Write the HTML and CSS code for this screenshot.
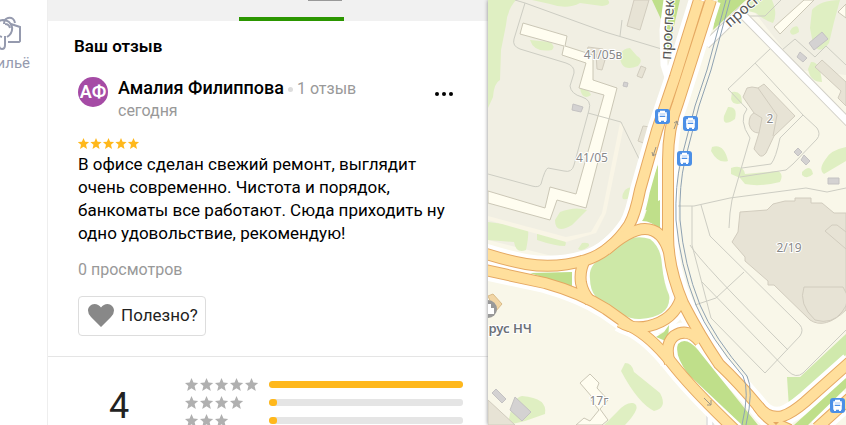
FILE: index.html
```
<!DOCTYPE html>
<html lang="ru">
<head>
    <meta charset="UTF-8">
    <meta name="viewport" content="width=device-width, initial-scale=1.0">
    <title>Отзывы</title>
    <link rel="stylesheet" href="styles.css">
</head>
<body>
    <div class="app">
        <!-- Рубрики слева -->
        <nav class="rubrics">
            <a href="#" class="rubric">
                <svg class="rubric-icon" width="30" height="36" viewBox="10 0 30 36" fill="none" stroke="#959aae" stroke-width="2">
                    <path d="M24 20v9q0 4-3 4t-3-4v-6M26 21q6-4 5-10q-2-7-9-7q-8 1-8 8t7 9M23 8q0-5 4-6q6-1 7 5M29 12q-1-4-5-4M30 8l9 3v14l-1 1H27"/>
                </svg>
                <span>Жильё</span>
            </a>
        </nav>

        <main class="panel">
            <div class="tabs">
                <div class="tab-badge"></div>
                <div class="tab-active"></div>
            </div>

            <section class="own-review">
                <h2>Ваш отзыв</h2>
                <article class="review">
                    <header class="author">
                        <div class="avatar">АФ</div>
                        <div class="author-info">
                            <div><span class="name">Амалия Филиппова</span><span class="dot"></span><span class="count">1 отзыв</span></div>
                            <div class="date">сегодня</div>
                        </div>
                        <button class="more" aria-label="Ещё"><i></i><i></i><i></i></button>
                    </header>
                    <svg class="stars" width="62" height="12" viewBox="0 0 62 12" fill="#ffb81c">
                        <defs>
                            <path id="star" d="M5.500 0l1.600 3.800 4 .3-3.100 2.700 1 4.200-3.500-2.300-3.500 2.300 1-4.200-3.100-2.700 4-.3z"/>
                            <path id="star-big" d="M6.500 0l2 4.500 4.700.4-3.600 3.200 1.200 4.800-4.300-2.600-4.300 2.600 1.200-4.800L0 4.900l4.600-.4z"/>
                        </defs>
                        <use href="#star"/><use href="#star" x="12.500"/><use href="#star" x="25"/><use href="#star" x="37.500"/><use href="#star" x="50"/>
                    </svg>
                    <p class="text">В офисе сделан свежий ремонт, выглядит очень современно. Чистота и порядок, банкоматы все работают. Сюда приходить ну одно удовольствие, рекомендую!</p>
                    <div class="views">0 просмотров</div>
                    <button class="useful">
                        <svg width="26" height="23" viewBox="0 0 26 23" fill="#888"><path d="M13 23L3 13Q0 10 0 6.500C0 3 3 0 6.500 0Q10.500 0 13 3.500Q15.500 0 19.500 0C23 0 26 3 26 6.500Q26 10 23 13z"/></svg>
                        Полезно?
                    </button>
                </article>
            </section>

            <section class="rating">
                <div class="score">4</div>
                <div class="rows">
                    <svg class="gray-stars" width="74" height="13" viewBox="0 0 74 13"><use href="#star-big"/><use href="#star-big" x="15"/><use href="#star-big" x="30"/><use href="#star-big" x="45"/><use href="#star-big" x="60"/></svg>
                    <div class="bar"><div class="fill" style="width: 100%"></div></div>
                    <svg class="gray-stars" width="74" height="13" viewBox="0 0 74 13"><use href="#star-big"/><use href="#star-big" x="15"/><use href="#star-big" x="30"/><use href="#star-big" x="45"/></svg>
                    <div class="bar"><div class="fill" style="width: 4%"></div></div>
                    <svg class="gray-stars" width="74" height="13" viewBox="0 0 74 13"><use href="#star-big"/><use href="#star-big" x="15"/><use href="#star-big" x="30"/></svg>
                    <div class="bar"><div class="fill" style="width: 4%"></div></div>
                </div>
            </section>
        </main>

        <!-- Карта -->
        <div class="map">
            <svg viewBox="488 0 358 425" preserveAspectRatio="xMinYMin slice">
                <defs>
                    <g id="stop">
                        <rect width="15" height="15" rx="3" fill="#4b8fe6"/>
                        <path d="M4 4h7v7H4zM3 6h9M5 2.500h5" fill="none" stroke="#fff" stroke-width="1.500"/>
                        <path d="M4 8h7v3H4zM4 11h2v2H4zM9 11h2v2H9z" fill="#fff"/>
                    </g>
                    <g id="roads">
                        <path d="M699 0L675 77L657 130L640 190Q635 215 629 225Q611 252 586 260Q556 269 526 264Q508 261 480 252"/>
                        <path d="M711 0L678 103Q668 128 668 160V235Q668 268 683 303Q700 336 719 364Q740 384 758 406Q768 420 783 416Q792 413 805 402L850 362"/>
                        <path d="M480 269L545 283Q581 293 606 309L630 326Q650 336 671 362Q692 389 735 430"/>
                        <path d="M586 258Q579 270 581 283Q583 293 590 301M606 250Q630 229 645 229Q662 229 669 252M620 322Q633 330 649 326Q674 320 681 298M670 363Q664 345 674 336Q688 327 700 342M850 398L817 428M758 406Q768 422 790 430"/>
                    </g>
                </defs>
                <rect x="488" width="358" height="425" fill="#f9f7e9"/>
                <path fill="#f1efe3" d="M488 0H698L640 200Q620 250 560 258L488 240zM745 0H846V75L800 70z"/>

                <!-- Зелень -->
                <g fill="#dfefc2">
                    <path d="M488 0H516Q507 10 506 25L501 50L500 80Q494 83 493 97L488 108zM532 0H608Q612 5 602 6L580 3Q567 10 550 4zM530 40L550 42Q556 46 552 50Q534 53 530 40zM620 55Q623 48 630 48L637 56Q644 60 638 66Q620 73 620 55zM580 88Q590 90 591 95Q582 101 580 88zM625 190Q632 184 631 192Q629 201 623 199Q621 196 625 190zM560 212Q575 206 587 210L572 225Q555 235 555 220zM488 222L527 227Q530 230 526 250Q516 254 514 242L488 240zM537 233L560 237Q568 240 565 246Q555 246 537 240zM582 243Q590 242 589 246Q582 252 578 249z"/>
                    <path d="M748 0H772Q778 14 773 23Q762 19 756 13L748 11zM812 10Q820 0 840 0L834 22L829 43Q820 56 813 44L810 28zM792 28Q799 23 799 32Q791 38 790 31zM811 62Q820 61 822 82Q810 82 808 69zM732 92Q742 90 742 103Q733 106 731 99zM728 107Q738 106 735 119Q722 128 724 116zM712 147Q724 143 728 161Q718 164 711 151zM731 168Q743 164 745 174L778 171Q784 174 780 182Q760 187 745 184L740 178L731 174zM802 172Q811 163 813 174Q807 180 802 175zM846 147Q830 150 825 160Q818 170 824 174L846 161z"/>
                    <path d="M625 363Q632 363 634 372L660 393Q668 408 654 411Q638 403 621 371zM633 403Q643 406 625 425H604L618 411Q626 402 633 403zM508 425Q512 397 522 396Q548 398 545 414L525 421z"/>
                </g>
                <path fill="#d0e9ac" d="M787 377H800L846 334V355L789 408z"/>
                <path fill="#bfdf8a" d="M680 0L666 60V30L652 0zM718 0H746L713 30zM659 162V210H640z"/>
                <path fill="#f9f5e6" d="M620 123L602 213L591 232L566 237L488 216V220L566 242L596 233L606 213L624 125z"/>

                <!-- Здания -->
                <g fill="#fffdf0" stroke="#cbc7b6">
                    <path d="M523 23L567 36L565 46L593 55L593 80L617 88L586 208L557 200L550 220L488 203V191L545 208L550 187L576 194L604 95L579 88L586 63L562 55L564 46L520 34z"/>
                    <path d="M774 27L804 0H814L780 34zM838 12L846 4V18zM580 383L590 374L599 383L597 388L608 400L600 409L608 420L602 425H576L584 418L590 421L599 410L591 400L592 397z"/>
                </g>
                <g fill="#e7e3d5" stroke="#d1ccbe">
                    <path d="M634 0H649L640 30L627 26zM588 47L603 49V59L605 60L602 70L597 69L596 54L587 52zM641 66L646 68L642 78L637 76zM643 126L650 127L646 144L638 141zM815 67L822 60L846 82V106L838 98L841 91z"/>
                    <path d="M743 97L747 88L752 87L758 88L764 84L795 116L774 136L766 153Q762 158 759 155L754 149L759 133Q751 133 749 124Q749 115 754 113z"/>
                    <path fill="none" d="M758 88L777 115L773 136M754 113L762 118L759 133"/>
                    <path d="M740 212L767 210L773 204L785 201H795V198H811V203H822L834 213H846V310Q825 330 810 320L774 285H768V281L745 261V257L732 242L738 232z"/>
                    <path d="M804 287H843Q852 300 842 312Q832 325 815 320Q798 304 804 287zM825 231L832 225H837L846 232V249zM488 400L515 425H488z"/>
                </g>
                <g fill="#d4d2d2" stroke="#c4c2c2">
                    <path d="M573 104L583 107L581 112L572 110zM624 82L628 83L627 87L623 86zM809 43L822 32L828 39L814 50zM800 52L807 58L803 62L797 57zM798 148L802 152L798 156L794 152zM804 155L810 161L806 165L801 160zM828 178H839V184H828zM496 389L506 399L502 403L492 393zM515 397L531 412L522 421L510 410z"/>
                </g>

                <!-- Дорожки -->
                <g fill="none" stroke="#cdcdc3">
                    <path d="M515 0L525 3L514 39Q512 46 520 49L566 63Q575 66 574 73L570 86Q571 94 582 97Q592 100 589 110L574 165Q572 173 564 171L548 168Q545 169 541 184Q539 188 532 186L488 174M525 3L605 32L665 50M622 20L620 36M588 113L621 122L645 171"/>
                    <path d="M770 49L728 89L747 109Q738 120 750 138L732 200L730 213M755 63L803 115L817 128Q821 134 817 139L793 164L786 170L740 177M803 115L780 138Q776 158 771 164L742 168M748 16L765 16L781 0M782 50L795 39L815 57L826 46L846 65M673 206H694L730 198L806 188L827 192L846 188M692 206V245L711 318L765 373L800 336Q804 330 800 325L710 236L701 205M690 245Q700 262 788 350M702 282L788 371Q796 379 803 373L846 330M692 306L716 298L744 272M730 213L729 228"/>
                </g>
                <path d="M706 45L740 12L850 124" fill="none" stroke="#d2d0c8" stroke-width="9"/>
                <path d="M706 45L740 12L850 124" fill="none" stroke="#fff" stroke-width="7"/>

                <!-- Развязка -->
                <path d="M667 0L663 30L664 65L672 90M710 405V425" fill="none" stroke="#fff" stroke-width="7"/>
                <path d="M707 405V425M713 410V425" fill="none" stroke="#ccc"/>
                <use href="#roads" fill="none" stroke="#fff" stroke-width="20"/>
                <path fill="#cde8a7" d="M590 279Q588 264 604 257L621 243Q635 234 650 239Q661 247 662 265Q664 285 669 295Q672 317 640 319Q624 320 596 297Q590 290 590 279z"/>
                <path fill="#bfdf8a" d="M530 273L572 272V287zM644 218L648 206L660 200V230Q652 221 642 221zM656 337L664 332L669 325L668 342zM678 344Q686 336 698 350L758 425H742L688 374Q674 355 678 344zM846 378L794 425H808L846 388z"/>
                <use href="#roads" fill="none" stroke="#e5a862" stroke-width="12"/>
                <use href="#roads" fill="none" stroke="#ffdf9c" stroke-width="10"/>
                <path fill="none" stroke="#9b9485" d="M653 156L656 147M652 152L653 156L656 154M674 129L677 121M674 123L677 121L678 125M704 398L711 405M707 405H711V400"/>
                <path fill="#e5a862" d="M773 422h6l-3 3z"/>

                <!-- Трамвайные пути -->
                <g fill="none" stroke="#8fa2b2">
                    <path id="tram" d="M726 0L707 70L695 106L681 160Q675 185 676 220Q680 265 696 305Q710 338 743 376Q750 390 742 425"/>
                    <use href="#tram" x="4"/>
                </g>
                <use href="#stop" x="655" y="109"/><use href="#stop" x="683" y="116"/><use href="#stop" x="677" y="151"/><use href="#stop" x="830" y="398"/>
                <path fill="#f2d6a5" stroke="#d9bb89" d="M488 296L493 294L502 304L495 312z"/>
                <circle cx="488" cy="309" r="9" fill="#999"/>
                <path fill="#fff" d="M488 304h3v4h3v6h-6z"/>

                <g class="map-text" text-anchor="middle">
                    <text x="603" y="59">41/05в</text>
                    <text x="592" y="162">41/05</text>
                    <text x="770" y="123">2</text>
                    <text x="789" y="252">2/19</text>
                    <text x="599" y="405">17г</text>
                    <text x="532" y="333" class="place" text-anchor="end">Парус НЧ</text>
                    <text class="street" text-anchor="start" transform="translate(671 60) rotate(-87)">проспект</text>
                    <text class="street" text-anchor="start" transform="translate(730 28) rotate(-42)">проспект</text>
                </g>
            </svg>
        </div>
    </div>
</body>
</html>
```

FILE: styles.css
```
* {
    box-sizing: border-box;
}
body {
    margin: 0;
    font-family: Roboto, "Noto Sans", sans-serif;
    color: #000;
    background-color: #fff;
}
.app {
    display: flex;
    height: 100vh;
    overflow: hidden;
}
.rubrics {
    flex: 0 0 48px;
    display: flex;
    justify-content: flex-end;
    padding: 16px 17px 0 0;
    overflow: hidden;
    border-right: 1px solid #eee;
}
.rubric {
    display: flex;
    flex-direction: column;
    align-items: flex-end;
    color: #959aae;
    font-size: 15px;
    line-height: 22px;
    text-decoration: none;
}
.rubric-icon {
    margin-right: 9px;
}
.panel {
    flex: 0 0 440px;
    overflow: hidden;
}
.tabs {
    display: flex;
    flex-direction: column;
    justify-content: space-between;
    height: 21px;
    background-color: #f1f1f1;
}
.tab-badge {
    width: 34px;
    height: 1px;
    margin-left: 260px;
    background-color: #999;
}
.tab-active {
    width: 105px;
    height: 4px;
    margin-left: 191px;
    background-color: #2b9600;
}
.own-review {
    padding: 13px 30px 20px 26px;
    border-bottom: 1px solid #e5e5e5;
}
h2 {
    margin: 0;
    font-size: 17px;
    line-height: 24px;
    font-weight: 600;
}
.review {
    padding: 19px 0 0 4px;
}
.author {
    display: flex;
    font-size: 18px;
    line-height: 22px;
}
.avatar {
    width: 30px;
    height: 30px;
    margin-right: 10px;
    border-radius: 50%;
    color: #fff;
    background-color: #a54ba5;
    line-height: 30px;
    font-weight: 600;
    text-align: center;
}
.author-info {
    flex: 1;
    white-space: nowrap;
}
.name {
    font-weight: 500;
}
.dot {
    display: inline-block;
    width: 5px;
    height: 5px;
    margin: 0 4px;
    border-radius: 50%;
    background-color: #ddd;
    vertical-align: middle;
}
.count,
.date,
.views {
    color: #999;
    font-size: 16px;
}
.more {
    display: flex;
    gap: 3px;
    align-self: flex-start;
    padding: 15px 5px 4px;
    border: none;
    background: none;
    cursor: pointer;
}
.more i {
    width: 4px;
    height: 4px;
    border-radius: 50%;
    background-color: #000;
}
.stars {
    display: block;
    margin-top: 16px;
}
.text {
    margin: 3px 0 14px;
    font-size: 17px;
    line-height: 23px;
}
.views {
    line-height: 22px;
}
.useful {
    display: flex;
    align-items: center;
    gap: 7px;
    height: 40px;
    margin-top: 15px;
    padding: 0 7px 2px 9px;
    border: 1px solid #ddd;
    border-radius: 4px;
    color: #222;
    background-color: #fff;
    font-family: inherit;
    font-size: 17px;
    cursor: pointer;
}
.rating {
    display: flex;
    padding: 18px 25px 0 0;
}
.score {
    width: 137px;
    padding: 6px 0 0 61px;
    color: #222;
    font-size: 36px;
    line-height: 50px;
}
.rows {
    flex: 1;
    display: grid;
    grid-template-columns: 74px 1fr;
    grid-auto-rows: 18px;
    align-items: center;
    column-gap: 10px;
}
.gray-stars {
    fill: #b0b0b0;
}
.bar {
    height: 7px;
    border-radius: 3px;
    background-color: #e5e5e5;
    overflow: hidden;
}
.fill {
    height: 7px;
    border-radius: 3px;
    background-color: #ffb81c;
}
.map {
    flex: 1;
    min-width: 0;
    box-shadow: 0 0 4px #888;
}
.map svg {
    display: block;
    width: 100%;
    height: 100%;
}
.map-text {
    fill: #888;
    stroke: #fff;
    stroke-width: 2px;
    paint-order: stroke;
    font-family: "Noto Sans", sans-serif;
    font-size: 12px;
}
.place {
    fill: #6d7178;
    font-size: 13px;
    font-weight: 600;
}
.street {
    fill: #555;
    font-size: 15px;
}
```
